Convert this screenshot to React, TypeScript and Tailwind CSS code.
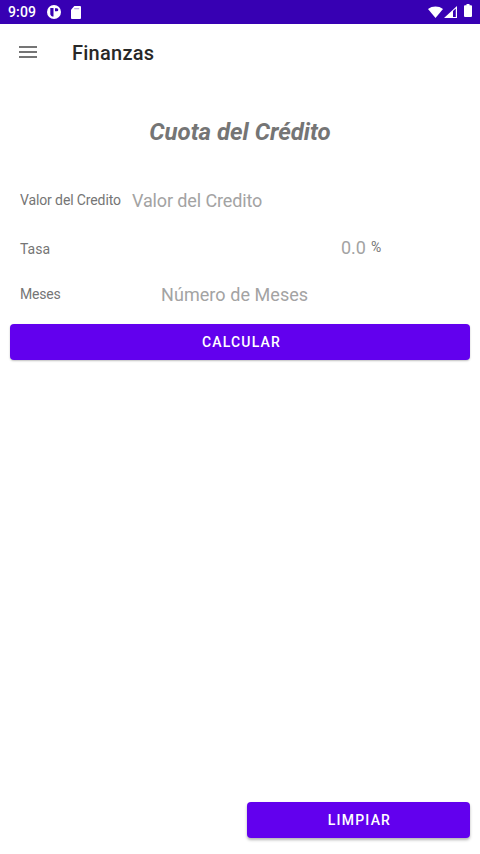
function StatusBar() {
  return (
    <div className="flex h-6 items-center bg-[#3700b3] pl-2 text-white">
      <span className="w-[39px] text-[14px] leading-6 font-medium tracking-[0.15px]">9:09</span>
      <svg className="h-[14px] w-[14px]" viewBox="0 0 14 14">
        <circle cx="7" cy="7" r="7" fill="#fff" />
        <path d="M3.300 3h3.200v8.400H5.200C4 10.800 3.300 10 3.300 9z" fill="#3700b3" />
        <path d="M8 3.300h1.800a1.500 1.500 0 0 1 0 3H8z" fill="#3700b3" />
      </svg>
      <svg className="ml-[10px] h-[13px] w-[10px]" viewBox="0 0 11 13" preserveAspectRatio="none">
        <path d="M3.700 0H10a1 1 0 0 1 1 1v11a1 1 0 0 1-1 1H1a1 1 0 0 1-1-1V3.800z" fill="#fff" />
        <path d="M3.500 2h5.500v1.300H3.500z" fill="#3700b3" opacity=".35" />
      </svg>
      <svg className="mr-px ml-auto h-3 w-[15px]" viewBox="0 0 16 13" preserveAspectRatio="none">
        <path d="M0 3.200C4.600-.4 11.400-.4 16 3.200L8 13z" fill="#fff" />
      </svg>
      <svg className="h-3 w-[13px]" viewBox="0 0 13 13" preserveAspectRatio="none">
        <path d="M13 0v13H0zM11.800 2.600L9 5.400v6.400h2.800z" fill="#fff" fillRule="evenodd" />
      </svg>
      <svg className="mr-2 mb-[3px] ml-[7px] h-[13px] w-2" viewBox="0 0 8 13">
        <path d="M2.500 0h3v1.200H7a1 1 0 0 1 1 1V12a1 1 0 0 1-1 1H1a1 1 0 0 1-1-1V2.200a1 1 0 0 1 1-1h1.500z" fill="#fff" />
      </svg>
    </div>
  );
}

export default function App() {
  return (
    <div className="flex h-[854px] w-[480px] flex-col overflow-hidden bg-white font-['Roboto',sans-serif] text-[#757575]">
      <StatusBar />
      <header className="flex h-14 items-center pl-[19px]">
        <button aria-label="Menu" className="flex w-[53px] flex-col gap-[3px]">
          <span className="h-[2px] w-[18px] bg-[#757575]" />
          <span className="h-[2px] w-[18px] bg-[#757575]" />
          <span className="h-[2px] w-[18px] bg-[#757575]" />
        </button>
        <h1 className="pt-[2px] text-[20px] leading-7 font-medium tracking-[0.250px] text-[#282828]">Finanzas</h1>
      </header>
      <main className="flex flex-1 flex-col px-[10px] pb-4">
        <h2 className="mt-9 text-center text-[24px] leading-8 font-bold italic">Cuota del Crédito</h2>
        <div className="mt-[38px] flex h-[30px] items-center pl-[10px]">
          <label className="w-[112px] pb-[2px] text-[14px] tracking-[-0.120px] whitespace-nowrap">Valor del Credito</label>
          <span className="pb-px text-[18px] tracking-[-0.120px] text-[#a3a3a3]">Valor del Credito</span>
        </div>
        <div className="mt-[17px] flex h-[30px] items-center pl-[10px]">
          <label className="w-[321px] pt-[3px] text-[14px]">Tasa</label>
          <span className="w-[30px] pb-[2px] text-[18px] text-[#a3a3a3]">0.0</span>
          <span className="pb-[2px] text-[14px]">%</span>
        </div>
        <div className="mt-[17px] flex h-[30px] items-center pl-[10px]">
          <label className="w-[141px] pb-[2px] text-[14px] tracking-[-0.200px]">Meses</label>
          <span className="pb-px text-[18px] tracking-[0.060px] text-[#a3a3a3]">Número de Meses</span>
        </div>
        <button className="mt-[14px] h-9 w-full rounded-[4px] bg-[#6200ee] pl-[3px] text-[14px] font-medium tracking-[1.150px] text-white shadow-[0_1px_2px_rgba(0,0,0,0.25)]">CALCULAR</button>
        <button className="mt-auto h-9 w-[223px] self-end rounded-[4px] bg-[#6200ee] pt-px pl-[2px] text-[14px] font-medium tracking-[1.200px] text-white shadow-[0_2px_3px_rgba(0,0,0,0.3)]">LIMPIAR</button>
      </main>
    </div>
  );
}
